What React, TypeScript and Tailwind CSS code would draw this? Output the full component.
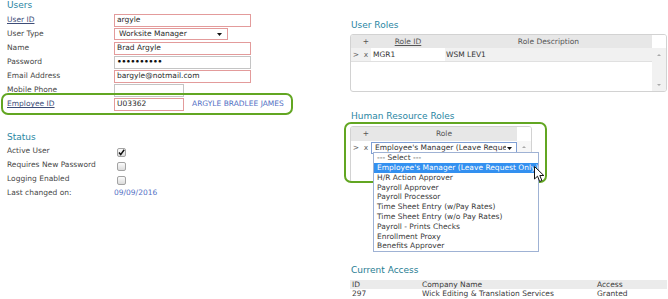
import React from "react";

const teal = "text-[#2a86a3]";

function Tri({ dir = "down", color = "#111", w = 5, h = 3 }: { dir?: "down" | "up"; color?: string; w?: number; h?: number }) {
  return (
    <svg width={w} height={h} viewBox={`0 0 ${w} ${h}`} className="block">
      {dir === "down" ? (
        <path d={`M0 0 L${w} 0 L${w / 2} ${h} Z`} fill={color} />
      ) : (
        <path d={`M0 ${h} L${w} ${h} L${w / 2} 0 Z`} fill={color} />
      )}
    </svg>
  );
}

function Check({ checked }: { checked?: boolean }) {
  return (
    <span className="ml-[3px] mt-[3px] w-[9px] h-[9px] rounded-[2px] border border-[#a3a3a3] bg-linear-to-b from-[#fbfbfb] to-[#dcdcdc] flex items-center justify-center">
      {checked && (
        <svg width="7" height="7" viewBox="0 0 7 7">
          <path d="M1 3.6 L2.7 5.6 L6.2 0.8" stroke="#111" strokeWidth="1.5" fill="none" />
        </svg>
      )}
    </span>
  );
}

function Row({ label, underline, children }: { label: string; underline?: boolean; children?: React.ReactNode }) {
  return (
    <div className="flex items-center h-[14px]">
      <div className={`w-[107px] shrink-0 ${underline ? "underline text-[#3d4d78]" : ""}`}>{label}</div>
      {children}
    </div>
  );
}

function Input({ value, red = true, w = 137 }: { value: React.ReactNode; red?: boolean; w?: number }) {
  return (
    <div
      className={`h-[13px] border ${red ? "border-[#e39b9b]" : "border-[#c4c4c4]"} bg-white pl-[2px] flex items-center text-[#2a2a2a]`}
      style={{ width: w }}
    >
      {value}
    </div>
  );
}

export default function App() {
  const items = [
    "--- Select ---",
    "Employee's Manager (Leave Request Only)",
    "H/R Action Approver",
    "Payroll Approver",
    "Payroll Processor",
    "Time Sheet Entry (w/Pay Rates)",
    "Time Sheet Entry (w/o Pay Rates)",
    "Payroll - Prints Checks",
    "Enrollment Proxy",
    "Benefits Approver",
  ];
  return (
    <div className="relative w-[668px] h-[299px] overflow-hidden bg-white flex font-['DejaVu_Sans',Verdana,sans-serif] text-[7.5px] leading-none text-[#474747]">
      {/* Left column */}
      <div className="w-[350px] shrink-0 pl-[7px]">
        <h2 className={`text-[9px] leading-[11px] ${teal}`}>Users</h2>
        <div className="mt-[2px]">
          <Row label="User ID" underline>
            <Input value="argyle" />
          </Row>
          <Row label="User Type">
            <div className="h-[12px] w-[114px] border border-[#e39b9b] bg-white flex items-center pl-[4px] pr-[5px] text-[#2a2a2a]">
              <span className="flex-1">Worksite Manager</span>
              <Tri />
            </div>
          </Row>
          <Row label="Name">
            <Input value="Brad Argyle" />
          </Row>
          <Row label="Password">
            <Input red={false} value={<span className="font-bold tracking-[-0.3px] text-[#111]">••••••••••</span>} />
          </Row>
          <Row label="Email Address">
            <Input value="bargyle@notmail.com" />
          </Row>
          <Row label="Mobile Phone">
            <Input red={false} w={70} value="" />
          </Row>
          <div className="relative">
            <Row label="Employee ID" underline>
              <Input value="U03362" w={70} />
              <span className="ml-[8px] text-[#5470c4]">ARGYLE BRADLEE JAMES</span>
            </Row>
            <div className="absolute left-[-6px] top-[-4px] w-[292px] h-[22px] border-[2.5px] border-[#62a622] rounded-[7px] pointer-events-none" />
          </div>
        </div>

        <h2 className={`mt-[21px] text-[9px] leading-[11px] ${teal}`}>Status</h2>
        <div className="mt-[1px]">
          <Row label="Active User">
            <Check checked />
          </Row>
          <Row label="Requires New Password">
            <Check />
          </Row>
          <Row label="Logging Enabled">
            <Check />
          </Row>
          <Row label="Last changed on:">
            <span className="text-[#5470c4]">09/09/2016</span>
          </Row>
        </div>
      </div>

      {/* Right column */}
      <div className="flex-1">
        <h2 className={`mt-[20px] text-[9px] leading-[11px] ${teal} pl-[1px]`}>User Roles</h2>
        <div className="mt-[3px] w-[317px] h-[58px] border border-[#d2d2d2] rounded-[3px] flex flex-col overflow-hidden">
          <div className="flex h-[13px] shrink-0">
            <div className="flex-1 bg-[#e7e7e7] flex items-center text-[#555]">
              <span className="w-[10px]" />
              <span className="w-[10px] text-center">+</span>
              <span className="w-[74px] text-center underline">Role ID</span>
              <span className="flex-1 text-center">Role Description</span>
            </div>
            <div className="w-[14px] bg-white" />
          </div>
          <div className="flex flex-1">
            <div className="flex-1 flex flex-col">
              <div className="flex h-[14px] items-center bg-[#f1f1f1] border-b border-[#e0e0e0] text-[#333]">
                <span className="w-[10px] text-center text-[#666]">&gt;</span>
                <span className="w-[10px] text-center text-[#666]">x</span>
                <span className="w-[74px] h-full bg-white flex items-center pl-[2px]">MGR1</span>
                <span className="flex-1 pl-[1px]">WSM LEV1</span>
              </div>
            </div>
            <div className="w-[14px] bg-[#f1f1f1] flex flex-col items-center justify-between pt-[6px] pb-[5px]">
              <Tri dir="up" color="#aaa" w={4} h={2} />
              <Tri dir="down" color="#aaa" w={4} h={2} />
            </div>
          </div>
        </div>

        <h2 className={`mt-[19px] text-[9px] leading-[11px] ${teal} pl-[1px]`}>Human Resource Roles</h2>
        <div className="relative mt-[4px] w-[182px] h-[57px]">
          <div className="w-full h-full border border-[#d2d2d2] rounded-[3px] flex flex-col overflow-hidden">
            <div className="flex h-[14px] shrink-0">
              <div className="flex-1 bg-[#e7e7e7] flex items-center text-[#555]">
                <span className="w-[10px]" />
                <span className="w-[10px] text-center">+</span>
                <span className="flex-1 text-center">Role</span>
              </div>
              <div className="w-[14px] bg-white" />
            </div>
            <div className="flex flex-1">
              <div className="flex-1">
                <div className="flex h-[12px] items-center mt-[1px] text-[#333]">
                  <span className="w-[10px] text-center text-[#666]">&gt;</span>
                  <span className="w-[10px] text-center text-[#666]">x</span>
                  <div className="flex-1 h-[12px] border border-[#7f9fd4] bg-white flex items-center pl-[3px] pr-[4px]">
                    <span className="w-[131px] overflow-hidden whitespace-nowrap">Employee's Manager (Leave Request Only)</span>
                    <span className="ml-auto">
                      <Tri />
                    </span>
                  </div>
                </div>
              </div>
              <div className="w-[14px] bg-[#f7f7f7] flex justify-center pt-[5px]">
                <Tri dir="up" color="#aaa" w={4} h={2} />
              </div>
            </div>
          </div>
          <div className="absolute left-[-6px] top-[-4px] w-[203px] h-[61px] border-[2.5px] border-[#62a622] rounded-[7px] pointer-events-none" />
          {/* dropdown */}
          <div className="absolute left-[23px] top-[26px] w-[166px] h-[100px] border border-[#9fb2d4] bg-white text-[#3a3a3a] py-0">
            {items.map((it, i) => (
              <div
                key={it}
                className={`h-[9.8px] flex items-center pl-[3px] whitespace-nowrap ${i === 1 ? "bg-[#3390f0] text-white" : ""}`}
              >
                {it}
              </div>
            ))}
          </div>
          {/* cursor */}
          <svg className="absolute left-[184px] top-[40px]" width="11" height="17" viewBox="0 0 11 17">
            <path d="M0.5 0.5 L0.5 13 L3.5 10.2 L5.7 15.5 L7.9 14.5 L5.8 9.5 L9.8 9.5 Z" fill="#fff" stroke="#111" strokeWidth="1" strokeLinejoin="round" />
          </svg>
        </div>

        <h2 className={`mt-[82px] text-[9px] leading-[11px] text-[#1f7d92] pl-[1px]`}>Current Access</h2>
        <div className="mt-[4px] w-[317px] text-[#3a3a3a]">
          <div className="flex h-[9px] items-center bg-[#ebebeb] pl-[2px]">
            <span className="w-[70px]">ID</span>
            <span className="w-[175px]">Company Name</span>
            <span>Access</span>
          </div>
          <div className="flex h-[10px] items-center pl-[2px]">
            <span className="w-[70px]">297</span>
            <span className="w-[175px]">Wick Editing &amp; Translation Services</span>
            <span>Granted</span>
          </div>
        </div>
      </div>
    </div>
  );
}
